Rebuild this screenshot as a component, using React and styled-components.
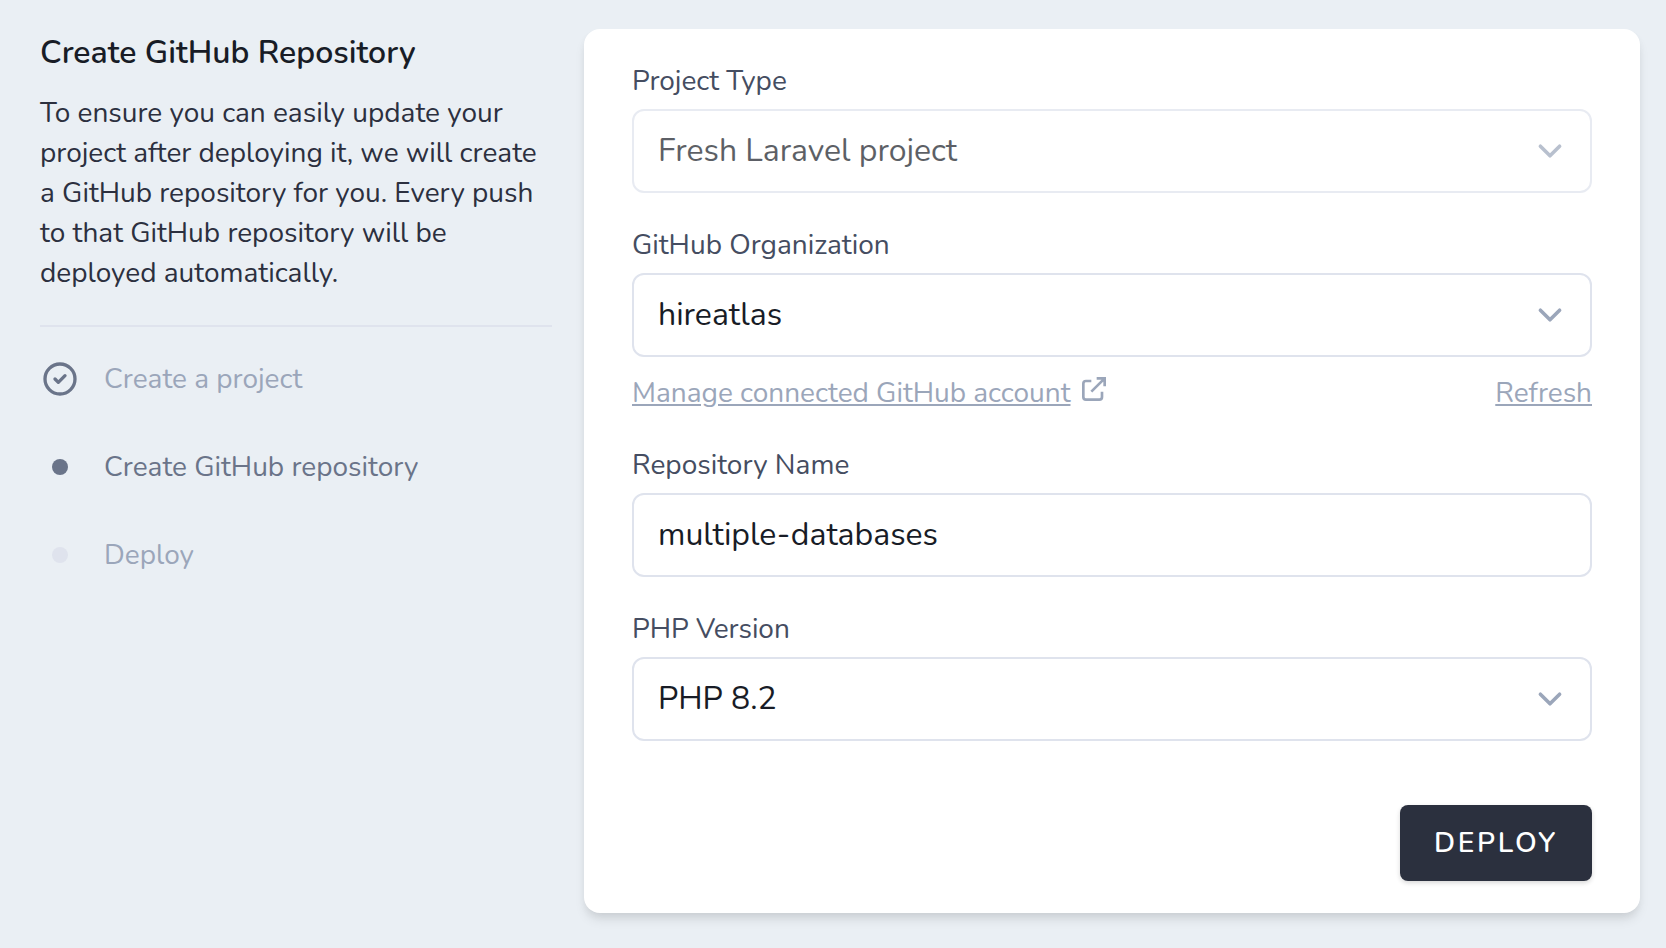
import React from 'react';
import styled, { createGlobalStyle } from 'styled-components';

const color = {
  page: '#eaeff4',
  card: '#ffffff',
  heading: '#181c26',
  body: '#2c303f',
  label: '#454d61',
  strong: '#6a7489',
  muted: '#9ba6ba',
  line: '#dfe3ed',
  button: '#2b303e',
};

const GlobalStyle = createGlobalStyle`
  *, *::before, *::after { box-sizing: border-box; }
  body {
    margin: 0;
    background: ${color.page};
    font-family: Nunito, Lato, sans-serif;
    font-size: 28px;
    line-height: 40px;
    color: ${color.body};
    -webkit-font-smoothing: antialiased;
  }
`;

const Page = styled.div`
  display: grid;
  grid-template-columns: 512px 1056px;
  column-gap: 32px;
  align-items: start;
  min-height: 948px;
  padding: 29px 26px 35px 40px;
`;

const Sidebar = styled.aside`
  display: flex;
  flex-direction: column;
`;

const Title = styled.h1`
  margin: 0 0 16px;
  font-size: 32px;
  line-height: 48px;
  font-weight: 600;
  color: ${color.heading};
`;

const Intro = styled.p`
  margin: 0;
`;

const Divider = styled.hr`
  width: 100%;
  margin: 32px 0;
  border: 0;
  border-top: 2px solid ${color.line};
`;

const Steps = styled.ol`
  display: flex;
  flex-direction: column;
  gap: 48px;
  margin: 0;
  padding: 0;
  list-style: none;
`;

const Step = styled.li`
  display: flex;
  align-items: center;
  gap: 24px;
  color: ${(p) => (p.$current ? color.strong : color.muted)};
`;

const StepMarker = styled.span`
  display: flex;
  align-items: center;
  justify-content: center;
  width: 40px;
  height: 40px;
  color: ${color.strong};
`;

const Dot = styled.span`
  width: 16px;
  height: 16px;
  border-radius: 50%;
  background: ${(p) => (p.$current ? color.strong : color.line)};
`;

const Card = styled.form`
  display: flex;
  flex-direction: column;
  gap: 32px;
  padding: 32px 48px;
  border-radius: 16px;
  background: ${color.card};
  box-shadow: 0 8px 12px -2px rgba(0, 0, 0, 0.1), 0 4px 8px -2px rgba(0, 0, 0, 0.06);
`;

const FieldGroup = styled.div`
  display: flex;
  flex-direction: column;
`;

const Label = styled.label`
  margin-bottom: 8px;
  color: ${color.label};
`;

const Control = styled.div`
  display: flex;
  align-items: center;
  justify-content: space-between;
  height: 84px;
  padding: 0 16px 0 24px;
  border: 2px solid ${color.line};
  border-radius: 12px;
  background: ${color.card};
  font-size: 32px;
  line-height: 48px;
  color: ${color.heading};
  opacity: ${(p) => (p.$disabled ? 0.7 : 1)};
`;

const FieldLinks = styled.div`
  display: flex;
  justify-content: space-between;
  margin-top: 16px;
  color: ${color.muted};
`;

const LinkWithIcon = styled.span`
  display: flex;
  align-items: flex-start;
  gap: 8px;
`;

const TextLink = styled.a`
  color: inherit;
  text-decoration: underline;
`;

const Actions = styled.div`
  display: flex;
  justify-content: flex-end;
  margin-top: 32px;
`;

const DeployButton = styled.button`
  width: 192px;
  height: 76px;
  padding: 0;
  border: 0;
  border-radius: 8px;
  background: ${color.button};
  color: #fff;
  font: 600 28px/40px Nunito, Lato, sans-serif;
  letter-spacing: 0.1em;
  text-transform: uppercase;
  box-shadow: 0 2px 4px rgba(0, 0, 0, 0.1), 0 2px 6px rgba(0, 0, 0, 0.06);
`;

const CheckCircle = () => (
  <svg width="40" height="40" viewBox="0 0 24 24" fill="none" stroke="currentColor" strokeWidth="2" strokeLinecap="round" strokeLinejoin="round">
    <path d="M9 12l2 2 4-4m6 2a9 9 0 11-18 0 9 9 0 0118 0z" />
  </svg>
);

const Chevron = () => (
  <svg width="48" height="48" viewBox="0 0 20 20" fill="none" stroke={color.muted} strokeWidth="1.5" strokeLinecap="round" strokeLinejoin="round">
    <path d="M6 8l4 4 4-4" />
  </svg>
);

const ExternalLink = () => (
  <svg width="32" height="32" viewBox="0 0 24 24" fill="none" stroke="currentColor" strokeWidth="2">
    <path d="M10 6H6a2 2 0 00-2 2v10a2 2 0 002 2h10a2 2 0 002-2v-4M14 4h6v6M20 4L10 14" />
  </svg>
);

const Field = ({ label, value, select, disabled, children }) => (
  <FieldGroup>
    <Label>{label}</Label>
    <Control $disabled={disabled}>
      <span>{value}</span>
      {select && <Chevron />}
    </Control>
    {children}
  </FieldGroup>
);

export default function App() {
  return (
    <>
      <GlobalStyle />
      <Page>
        <Sidebar>
          <Title>Create GitHub Repository</Title>
          <Intro>
            To ensure you can easily update your project after deploying it, we will create a GitHub
            repository for you. Every push to that GitHub repository will be deployed automatically.
          </Intro>
          <Divider />
          <Steps>
            <Step>
              <StepMarker><CheckCircle /></StepMarker>
              Create a project
            </Step>
            <Step $current>
              <StepMarker><Dot $current /></StepMarker>
              Create GitHub repository
            </Step>
            <Step>
              <StepMarker><Dot /></StepMarker>
              Deploy
            </Step>
          </Steps>
        </Sidebar>
        <Card>
          <Field label="Project Type" value="Fresh Laravel project" select disabled />
          <Field label="GitHub Organization" value="hireatlas" select>
            <FieldLinks>
              <LinkWithIcon>
                <TextLink>Manage connected GitHub account</TextLink>
                <ExternalLink />
              </LinkWithIcon>
              <TextLink>Refresh</TextLink>
            </FieldLinks>
          </Field>
          <Field label="Repository Name" value="multiple-databases" />
          <Field label="PHP Version" value="PHP 8.2" select />
          <Actions>
            <DeployButton type="button">Deploy</DeployButton>
          </Actions>
        </Card>
      </Page>
    </>
  );
}
